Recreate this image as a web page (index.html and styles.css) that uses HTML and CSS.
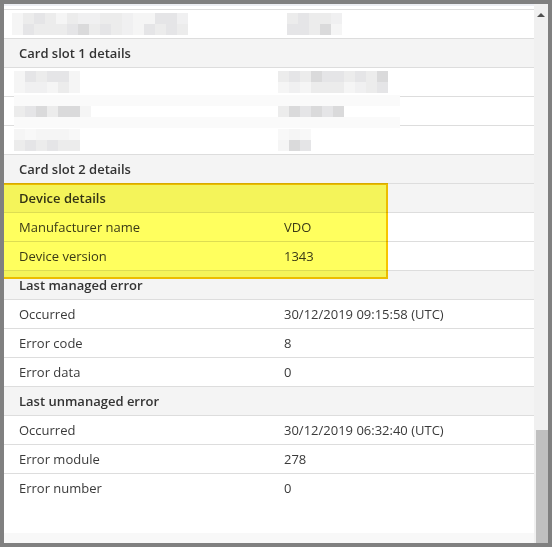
FILE: index.html
```html
<!DOCTYPE html>
<html>
<head>
<meta charset="utf-8">
<link rel="stylesheet" href="styles.css">
</head>
<body>
<div class="window">
  <div class="content">
    <div class="topline"></div>
    <div class="gap"></div>
    <div class="table">
      <div class="row">
        <div class="cell label">
          <div class="mosaic shift-l">
            <div class="mrow"><span class="m1"></span><span class="m2"></span><span class="m3"></span><span class="m2"></span><span class="m1"></span><span class="m2"></span><span class="m5"></span><span class="m5"></span><span class="m2"></span><span class="m2"></span><span class="m5"></span><span class="m1"></span><span class="m1"></span><span class="m3"></span><span class="m3"></span><span class="m5"></span></div>
            <div class="mrow"><span class="m1"></span><span class="m3"></span><span class="m2"></span><span class="m2"></span><span class="m2"></span><span class="m3"></span><span class="m4"></span><span class="m2"></span><span class="m3"></span><span class="m2"></span><span class="m5"></span><span class="m1"></span><span class="m3"></span><span class="m2"></span><span class="m3"></span><span class="m2"></span></div>
          </div>
        </div>
        <div class="cell value">
          <div class="mosaic shift-r">
            <div class="mrow"><span class="m2"></span><span class="m3"></span><span class="m2"></span><span class="m2"></span><span class="m5"></span></div>
            <div class="mrow"><span class="m3"></span><span class="m3"></span><span class="m2"></span><span class="m4"></span><span class="m1"></span></div>
          </div>
        </div>
      </div>

      <div class="row head"><div class="cell label">Card slot 1 details</div><div class="cell value"></div></div>

      <div class="blurgroup">
        <div class="row">
          <div class="cell label">
            <div class="mosaic shift-s">
              <div class="mrow"><span class="m1"></span><span class="m3"></span><span class="m2"></span><span class="m3"></span><span class="m3"></span><span class="m1"></span></div>
              <div class="mrow"><span class="m1"></span><span class="m5"></span><span class="m5"></span><span class="m1"></span><span class="m2"></span><span class="m1"></span></div>
            </div>
          </div>
          <div class="cell value">
            <div class="mosaic shift-v">
              <div class="mrow"><span class="m2"></span><span class="m3"></span><span class="m2"></span><span class="m4"></span><span class="m3"></span><span class="m3"></span><span class="m2"></span><span class="m3"></span><span class="m2"></span><span class="m4"></span></div>
              <div class="mrow"><span class="m1"></span><span class="m5"></span><span class="m1"></span><span class="m2"></span><span class="m2"></span><span class="m2"></span><span class="m1"></span><span class="m5"></span><span class="m2"></span><span class="m3"></span></div>
            </div>
          </div>
        </div>
        <div class="row">
          <div class="cell label">
            <div class="mosaic shift-s">
              <div class="mrow"><span class="m2"></span><span class="m3"></span><span class="m4"></span><span class="m2"></span><span class="m4"></span><span class="m4"></span><span class="m1"></span></div>
            </div>
          </div>
          <div class="cell value">
            <div class="mosaic shift-v">
              <div class="mrow"><span class="m2"></span><span class="m4"></span><span class="m3"></span><span class="m4"></span><span class="m3"></span><span class="m4"></span></div>
            </div>
          </div>
        </div>
        <div class="row">
          <div class="cell label">
            <div class="mosaic shift-s">
              <div class="mrow"><span class="m1"></span><span class="m6"></span><span class="m1"></span><span class="m1"></span><span class="m1"></span><span class="m6"></span></div>
              <div class="mrow"><span class="m2"></span><span class="m3"></span><span class="m2"></span><span class="m3"></span><span class="m2"></span><span class="m2"></span></div>
            </div>
          </div>
          <div class="cell value">
            <div class="mosaic shift-v">
              <div class="mrow"><span class="m6"></span><span class="m1"></span><span class="m6"></span></div>
              <div class="mrow"><span class="m1"></span><span class="m4"></span><span class="m3"></span></div>
            </div>
          </div>
        </div>
        <div class="strip strip-a"></div>
        <div class="strip strip-b"></div>
      </div>

      <div class="row head"><div class="cell label">Card slot 2 details</div><div class="cell value"></div></div>
      <div class="highlight-group">
        <div class="row head"><div class="cell label">Device details</div><div class="cell value"></div></div>
        <div class="row"><div class="cell label">Manufacturer name</div><div class="cell value">VDO</div></div>
        <div class="row"><div class="cell label">Device version</div><div class="cell value">1343</div></div>
        <div class="highlight"></div>
      </div>
      <div class="row head"><div class="cell label">Last managed error</div><div class="cell value"></div></div>
      <div class="row"><div class="cell label">Occurred</div><div class="cell value">30/12/2019 09:15:58 (UTC)</div></div>
      <div class="row"><div class="cell label">Error code</div><div class="cell value">8</div></div>
      <div class="row"><div class="cell label">Error data</div><div class="cell value">0</div></div>
      <div class="row head"><div class="cell label">Last unmanaged error</div><div class="cell value"></div></div>
      <div class="row"><div class="cell label">Occurred</div><div class="cell value">30/12/2019 06:32:40 (UTC)</div></div>
      <div class="row"><div class="cell label">Error module</div><div class="cell value">278</div></div>
      <div class="row last"><div class="cell label">Error number</div><div class="cell value">0</div></div>
    </div>
    <div class="filler"></div>
    <div class="bottomstrip"></div>
  </div>
  <div class="scrollbar">
    <div class="arrow"></div>
    <div class="track"></div>
    <div class="thumb"></div>
  </div>
</div>
</body>
</html>
```

FILE: styles.css
```css
html, body {
  margin: 0;
  padding: 0;
}
body {
  width: 552px;
  height: 547px;
  background: #808080;
  font-family: "Open Sans", "DejaVu Sans", sans-serif;
  font-size: 13px;
  color: #3a3a3a;
  overflow: hidden;
}
.window {
  margin: 4px;
  width: 544px;
  height: 539px;
  display: flex;
}
.content {
  width: 530px;
  background: #ffffff;
  display: flex;
  flex-direction: column;
  overflow: hidden;
}
.topline {
  height: 2px;
  background: #eceef3;
}
.gap {
  height: 3px;
}
.table {
  border-top: 1px solid #dddddd;
}
.row {
  display: grid;
  grid-template-columns: 265px 1fr;
  height: 28px;
  border-bottom: 1px solid #dddddd;
  background: #ffffff;
}
.row.last {
  border-bottom: none;
}
.row.head {
  background: #f4f4f4;
  font-weight: 600;
  color: #333333;
}
.cell {
  padding-left: 15px;
  display: flex;
  align-items: center;
  white-space: nowrap;
}
.mosaic {
  display: flex;
  flex-direction: column;
}
.mrow {
  display: flex;
}
.mrow span {
  width: 11px;
  height: 11px;
}
.m1 { background: #f5f5f5; }
.m2 { background: #ececec; }
.m3 { background: #e5e5e7; }
.m4 { background: #dadadb; }
.m5 { background: #f0f0f1; }
.m6 { background: #f8f8f8; }
.shift-l { margin-left: -7px; }
.shift-r { margin-left: 3px; }
.shift-s { margin-left: -5px; }
.shift-v { margin-left: -6px; }
.blurgroup {
  position: relative;
}
.strip {
  position: absolute;
  left: 10px;
  width: 386px;
  height: 11px;
  background: #fafafa;
}
.strip-a { top: 27px; }
.strip-b { top: 49px; }
.highlight-group {
  position: relative;
}
.highlight {
  position: absolute;
  left: -2px;
  top: -1px;
  width: 382px;
  height: 92px;
  border: 2px solid #f7c600;
  background: #ffff5e;
  mix-blend-mode: multiply;
}
.filler {
  flex: 1;
}
.bottomstrip {
  height: 10px;
  background: #f8f8f8;
}
.scrollbar {
  width: 14px;
  background: #f0f0f0;
  display: flex;
  flex-direction: column;
  align-items: flex-end;
}
.arrow {
  margin-top: 9px;
  margin-right: 3px;
  width: 0;
  height: 0;
  border-left: 4px solid transparent;
  border-right: 4px solid transparent;
  border-bottom: 4px solid #505050;
}
.track {
  flex: 1;
}
.thumb {
  width: 12px;
  height: 113px;
  background: #c0c0c0;
}
```
